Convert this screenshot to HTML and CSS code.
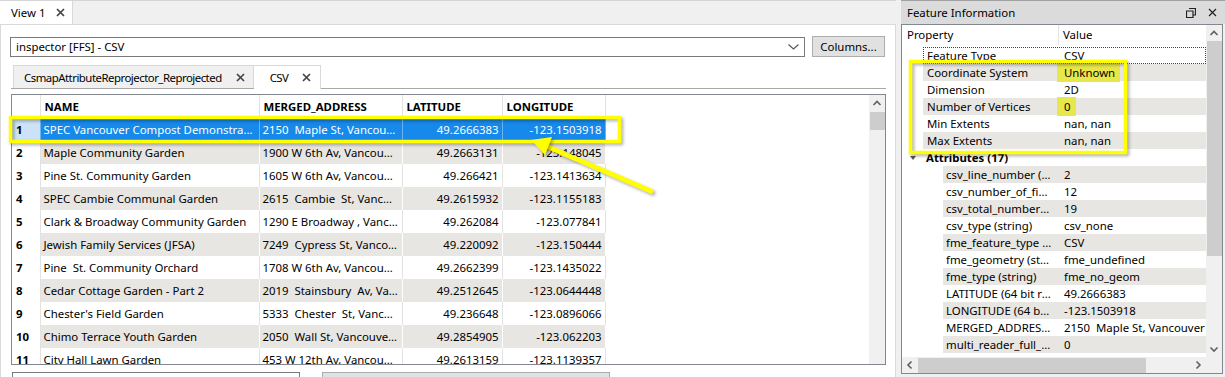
FILE: index.html
```html
<!doctype html>
<html lang="en">
  <head>
    <meta charset="UTF-8" />
    <title>Inspector</title>
    <link rel="stylesheet" href="styles.css">
  </head>

  <body>
    <!-- Main view -->
    <div class="main">
      <div class="tabbar">
        <div class="tab">
          <span>View 1</span>
          <svg class="close" width="9" height="9" viewBox="0 0 9 9"><path d="M1 1L8 8M8 1L1 8" /></svg>
        </div>
      </div>

      <div class="view">
        <div class="toolbar">
          <div class="combo">
            <span>inspector [FFS] - CSV</span>
            <svg class="chevron" width="11" height="6" viewBox="0 0 11 6"><path d="M0.5 0.5L5.5 5L10.5 0.5" /></svg>
          </div>
          <button class="btn">Columns...</button>
        </div>

        <div class="subtabs">
          <div class="subtab">
            <span class="label">CsmapAttributeReprojector_Reprojected</span>
            <svg class="close" width="9" height="9" viewBox="0 0 9 9"><path d="M1 1L8 8M8 1L1 8" /></svg>
          </div>
          <div class="subtab active">
            <span class="label">CSV</span>
            <svg class="close" width="9" height="9" viewBox="0 0 9 9"><path d="M1 1L8 8M8 1L1 8" /></svg>
          </div>
        </div>

        <div class="pane">
          <div class="grid-box">
            <div class="grid-area">
              <table class="grid">
                <colgroup>
                  <col class="c-num" />
                  <col class="c-name" />
                  <col class="c-addr" />
                  <col class="c-lat" />
                  <col class="c-lon" />
                </colgroup>
                <thead>
                  <tr>
                    <th></th>
                    <th>NAME</th>
                    <th>MERGED_ADDRESS</th>
                    <th>LATITUDE</th>
                    <th>LONGITUDE</th>
                  </tr>
                </thead>
                <tbody>
                  <tr class="selected">
                    <td class="num">1</td>
                    <td>SPEC Vancouver Compost Demonstration Garden</td>
                    <td>2150  Maple St, Vancouver BC</td>
                    <td class="r">49.2666383</td>
                    <td class="r">-123.1503918</td>
                  </tr>
                  <tr class="alt">
                    <td class="num">2</td>
                    <td>Maple Community Garden</td>
                    <td>1900 W 6th Av, Vancouver BC</td>
                    <td class="r">49.2663131</td>
                    <td class="r">-123.148045</td>
                  </tr>
                  <tr>
                    <td class="num">3</td>
                    <td>Pine St. Community Garden</td>
                    <td>1605 W 6th Av, Vancouver BC</td>
                    <td class="r">49.266421</td>
                    <td class="r">-123.1413634</td>
                  </tr>
                  <tr class="alt">
                    <td class="num">4</td>
                    <td>SPEC Cambie Communal Garden</td>
                    <td>2615  Cambie  St, Vancouver BC</td>
                    <td class="r">49.2615932</td>
                    <td class="r">-123.1155183</td>
                  </tr>
                  <tr>
                    <td class="num">5</td>
                    <td>Clark &amp; Broadway Community Garden</td>
                    <td>1290 E Broadway , Vancouver BC</td>
                    <td class="r">49.262084</td>
                    <td class="r">-123.077841</td>
                  </tr>
                  <tr class="alt">
                    <td class="num">6</td>
                    <td>Jewish Family Services (JFSA)</td>
                    <td>7249  Cypress St, Vancouver BC</td>
                    <td class="r">49.220092</td>
                    <td class="r">-123.150444</td>
                  </tr>
                  <tr>
                    <td class="num">7</td>
                    <td>Pine  St. Community Orchard</td>
                    <td>1708 W 6th Av, Vancouver BC</td>
                    <td class="r">49.2662399</td>
                    <td class="r">-123.1435022</td>
                  </tr>
                  <tr class="alt">
                    <td class="num">8</td>
                    <td>Cedar Cottage Garden - Part 2</td>
                    <td>2019  Stainsbury  Av, Vancouver BC</td>
                    <td class="r">49.2512645</td>
                    <td class="r">-123.0644448</td>
                  </tr>
                  <tr>
                    <td class="num">9</td>
                    <td>Chester's Field Garden</td>
                    <td>5333  Chester  St, Vancouver BC</td>
                    <td class="r">49.236648</td>
                    <td class="r">-123.0896066</td>
                  </tr>
                  <tr class="alt">
                    <td class="num">10</td>
                    <td>Chimo Terrace Youth Garden</td>
                    <td>2050  Wall St, Vancouver BC</td>
                    <td class="r">49.2854905</td>
                    <td class="r">-123.062203</td>
                  </tr>
                  <tr>
                    <td class="num">11</td>
                    <td>City Hall Lawn Garden</td>
                    <td>453 W 12th Av, Vancouver BC</td>
                    <td class="r">49.2613159</td>
                    <td class="r">-123.1139357</td>
                  </tr>
                </tbody>
              </table>
            </div>
            <div class="vscroll">
              <svg class="arrow" width="16" height="16" viewBox="0 0 16 16"><path d="M4.5 10L8 6.5L11.5 10" /></svg>
              <div class="thumb"></div>
            </div>
          </div>

          <div class="bottom">
            <div class="bottom-field"></div>
            <div class="bottom-bar"></div>
          </div>
        </div>
      </div>
    </div>

    <!-- Feature Information dock -->
    <div class="side">
      <div class="side-title">
        <span>Feature Information</span>
        <div class="side-icons">
          <svg width="10" height="10" viewBox="0 0 10 10"><path d="M3 0.5H9.5V7H7.5M0.5 3H7V9.5H0.5Z" /></svg>
          <svg width="9" height="9" viewBox="0 0 9 9"><path d="M1 1L8 8M8 1L1 8" /></svg>
        </div>
      </div>

      <div class="side-body">
        <div class="tree">
          <div class="tree-head">
            <div class="hk">Property</div>
            <div class="hv">Value</div>
          </div>
          <div class="prow focus"><div class="k">Feature Type</div><div class="v">CSV</div></div>
          <div class="prow alt"><div class="k">Coordinate System</div><div class="v"><span class="hl">Unknown</span></div></div>
          <div class="prow"><div class="k">Dimension</div><div class="v">2D</div></div>
          <div class="prow alt"><div class="k">Number of Vertices</div><div class="v"><span class="hl">0</span></div></div>
          <div class="prow"><div class="k">Min Extents</div><div class="v">nan, nan</div></div>
          <div class="prow alt"><div class="k">Max Extents</div><div class="v">nan, nan</div></div>
          <div class="group">
            <svg class="twisty" width="8" height="8" viewBox="0 0 8 8"><path d="M1 2H7L4 6Z" /></svg>
            <span>Attributes (17)</span>
          </div>
          <div class="prow sub alt"><div class="k">csv_line_number (uint32)</div><div class="v">2</div></div>
          <div class="prow sub"><div class="k">csv_number_of_fields (uint32)</div><div class="v">12</div></div>
          <div class="prow sub alt"><div class="k">csv_total_number_of_lines (uint32)</div><div class="v">19</div></div>
          <div class="prow sub"><div class="k">csv_type (string)</div><div class="v">csv_none</div></div>
          <div class="prow sub alt"><div class="k">fme_feature_type (string)</div><div class="v">CSV</div></div>
          <div class="prow sub"><div class="k">fme_geometry (string)</div><div class="v">fme_undefined</div></div>
          <div class="prow sub alt"><div class="k">fme_type (string)</div><div class="v">fme_no_geom</div></div>
          <div class="prow sub"><div class="k">LATITUDE (64 bit real)</div><div class="v">49.2666383</div></div>
          <div class="prow sub alt"><div class="k">LONGITUDE (64 bit real)</div><div class="v">-123.1503918</div></div>
          <div class="prow sub"><div class="k">MERGED_ADDRESS (string)</div><div class="v">2150  Maple St, Vancouver BC</div></div>
          <div class="prow sub alt"><div class="k">multi_reader_full_id (int32)</div><div class="v">0</div></div>
          <div class="prow sub"><div class="k">multi_reader_id (int32)</div><div class="v">0</div></div>
        </div>
        <div class="side-vscroll">
          <svg class="arrow" width="16" height="16" viewBox="0 0 16 16"><path d="M4.5 10L8 6.5L11.5 10" /></svg>
          <div class="thumb"></div>
          <div class="track"></div>
          <svg class="arrow" width="16" height="16" viewBox="0 0 16 16"><path d="M4.5 6.5L8 10L11.5 6.5" /></svg>
        </div>
        <div class="side-hscroll">
          <svg class="arrow" width="16" height="16" viewBox="0 0 16 16"><path d="M9.5 4.5L6 8L9.5 11.5" /></svg>
          <div class="hthumb"></div>
          <div class="track"></div>
          <svg class="arrow" width="16" height="16" viewBox="0 0 16 16"><path d="M6.5 4.5L10 8L6.5 11.5" /></svg>
        </div>
        <div class="corner"></div>
      </div>
    </div>

    <!-- Yellow callouts drawn over the screenshot -->
    <svg class="callouts" width="1225" height="377" viewBox="0 0 1225 377">
      <rect x="10.5" y="117.5" width="609" height="24" />
      <rect x="910.5" y="61.5" width="215" height="91" />
      <line x1="653" y1="192" x2="546" y2="146" />
      <polygon points="531,140 552,137 545,155" />
    </svg>
  </body>
</html>
```

FILE: styles.css
```css
body {
  margin: 0;
  width: 1225px;
  height: 377px;
  overflow: hidden;
  display: flex;
  gap: 5px;
  background-color: #f0f0f0;
  font-family: "Noto Sans", "Segoe UI", sans-serif;
  font-size: 11.4px;
  color: #000;
}

svg path {
  fill: none;
  stroke: #333;
  stroke-width: 1.4;
}

/* ---------- main view ---------- */

.main {
  width: 896px;
  display: flex;
  flex-direction: column;
}

.tabbar {
  height: 24px;
  flex-shrink: 0;
  display: flex;
  border-top: 1px solid #d4d4d4;
  box-sizing: border-box;
}

.tab {
  width: 73px;
  background-color: #fff;
  border-right: 1px solid #d9d9d9;
  display: flex;
  align-items: center;
  padding-left: 11px;
  gap: 11px;
  box-sizing: border-box;
}

.close path {
  stroke: #444;
  stroke-width: 1.7;
}

.view {
  flex: 1;
  min-height: 0;
  background-color: #fff;
  border: 1px solid #d9d9d9;
  border-bottom: none;
  padding: 11px 10px 0 9px;
}

.toolbar {
  display: flex;
  align-items: center;
  gap: 7px;
}

.combo {
  flex: 1;
  height: 20px;
  border: 1px solid #7a7a7a;
  box-sizing: border-box;
  display: flex;
  align-items: center;
  justify-content: space-between;
  padding: 0 5px 0 5px;
}

.chevron path {
  stroke: #555;
  stroke-width: 1.1;
}

.btn {
  width: 73px;
  height: 21px;
  background-color: #e1e1e1;
  border: 1px solid #adadad;
  font-family: inherit;
  font-size: 11.4px;
  color: #000;
  padding: 0;
}

.subtabs {
  display: flex;
  align-items: flex-end;
  height: 24px;
  margin-top: 7px;
  padding-left: 3px;
}

.subtab {
  height: 23px;
  box-sizing: border-box;
  display: flex;
  align-items: center;
  gap: 14px;
  padding: 0 8px 0 10px;
  background-color: #f0f0f0;
  border: 1px solid #d9d9d9;
  border-bottom: none;
}

.subtab .label {
  letter-spacing: -0.5px;
}

.subtab.active {
  height: 24px;
  background-color: #fff;
  border-left: none;
  padding: 0 9px 0 16px;
  gap: 14px;
  margin-bottom: -1px;
  position: relative;
}

.pane {
  margin-left: 1px;
  border-top: 1px solid #a8a8a8;
  width: 875px;
  padding-top: 5px;
}

.grid-box {
  height: 271px;
  border: 1px solid #828790;
  box-sizing: border-box;
  display: flex;
}

.grid-area {
  flex: 1;
  overflow: hidden;
}

.grid {
  border-collapse: collapse;
  table-layout: fixed;
  width: 593px;
}

.c-num { width: 28px; }
.c-name { width: 219px; }
.c-addr { width: 143px; }
.c-lat { width: 100px; }
.c-lon { width: 103px; }

.grid th,
.grid td {
  height: 23px;
  padding: 0 3px;
  white-space: pre;
  overflow: hidden;
  text-overflow: ellipsis;
  border-right: 1px solid #e2e2e2;
  text-align: left;
}

.grid th {
  height: 23px;
  font-weight: bold;
  background-color: #fff;
  padding-left: 4px;
}

.grid td.r {
  text-align: right;
  padding-right: 3px;
}

.grid td.num {
  font-weight: bold;
  background-color: #fff;
  padding-left: 4px;
}

.grid tr.alt td {
  background-color: #e8e6e3;
  border-right-color: #fff;
}

.grid tr.alt td.num {
  background-color: #fff;
  border-right-color: #e2e2e2;
}

.grid tr.selected td {
  background-color: #1689ea;
  color: #fff;
  border-right-color: #6cb4f0;
}

.grid tr.selected td.num {
  background-color: #cce2f6;
  color: #000;
}

.vscroll {
  width: 16px;
  background-color: #f0f0f0;
  display: flex;
  flex-direction: column;
}

.arrow path {
  stroke: #606060;
  stroke-width: 1.6;
}

.thumb {
  height: 18px;
  margin: 1px 0 0 1px;
  background-color: #cdcdcd;
}

.bottom {
  display: flex;
  gap: 22px;
  margin-top: 7px;
  padding-left: 1px;
}

.bottom-field {
  width: 288px;
  height: 16px;
  border: 1px solid #7a7a7a;
  box-sizing: border-box;
}

.bottom-bar {
  width: 288px;
  height: 16px;
  background-color: #e1e1e1;
  border: 1px solid #adadad;
  box-sizing: border-box;
}

/* ---------- feature information ---------- */

.side {
  width: 324px;
  display: flex;
  flex-direction: column;
}

.side-title {
  height: 24px;
  flex-shrink: 0;
  box-sizing: border-box;
  border-top: 1px solid #a0a0a0;
  background-color: #dbdbdb;
  display: flex;
  align-items: center;
  justify-content: space-between;
  padding: 0 8px 0 6px;
}

.side-icons {
  display: flex;
  align-items: center;
  gap: 12px;
}

.side-icons path {
  stroke: #222;
  stroke-width: 1.2;
}

.side-body {
  height: 350px;
  flex-shrink: 0;
  background-color: #fff;
  border: 1px solid #828790;
  margin-right: 2px;
  box-sizing: border-box;
  display: grid;
  grid-template-columns: 1fr 16px;
  grid-template-rows: 1fr 16px;
}

.tree {
  overflow: hidden;
  min-height: 0;
}

.tree-head {
  display: flex;
  height: 20px;
  margin-bottom: 2px;
}

.hk {
  width: 157px;
  padding-left: 5px;
  box-sizing: border-box;
  border-right: 1px solid #e5e5e5;
  line-height: 20px;
}

.hv {
  padding-left: 4px;
  line-height: 20px;
}

.prow {
  display: flex;
  height: 17px;
  line-height: 17px;
  margin-left: 21px;
  white-space: pre;
}

.prow.alt {
  background-color: #e8e6e3;
}

.prow.focus {
  outline: 1px dotted #444;
  outline-offset: -1px;
}

.k {
  width: 137px;
  flex-shrink: 0;
  padding: 0 8px 0 4px;
  box-sizing: border-box;
  overflow: hidden;
  text-overflow: ellipsis;
}

.v {
  padding-left: 4px;
}

.prow.sub {
  margin-left: 41px;
}

.prow.sub .k {
  width: 117px;
  padding-left: 3px;
}

.hl {
  background-color: #e7e74b;
  padding: 2px 5px 2px 7px;
  margin-left: -7px;
}

.group {
  height: 17px;
  display: flex;
  align-items: center;
  font-weight: bold;
  padding-left: 7px;
  gap: 9px;
}

.twisty path {
  fill: #555;
  stroke: none;
}

.side-vscroll {
  background-color: #f0f0f0;
  display: flex;
  flex-direction: column;
  min-height: 0;
}

.side-vscroll .thumb {
  height: 215px;
  margin-top: 0;
}

.track {
  flex: 1;
}

.side-hscroll {
  background-color: #f0f0f0;
  display: flex;
}

.hthumb {
  width: 228px;
  margin-top: 1px;
  background-color: #cdcdcd;
}

.corner {
  background-color: #f0f0f0;
}

/* ---------- callouts ---------- */

.callouts {
  position: absolute;
  left: 0;
  top: 0;
  pointer-events: none;
}

.callouts rect,
.callouts line {
  fill: none;
  stroke: #ffff00;
  stroke-width: 3.5;
  filter: drop-shadow(2px 2px 1.5px rgba(0, 0, 0, 0.3));
}

.callouts line {
  stroke-width: 5;
}

.callouts polygon {
  fill: #ffff00;
  filter: drop-shadow(2px 2px 1.5px rgba(0, 0, 0, 0.3));
}
```
